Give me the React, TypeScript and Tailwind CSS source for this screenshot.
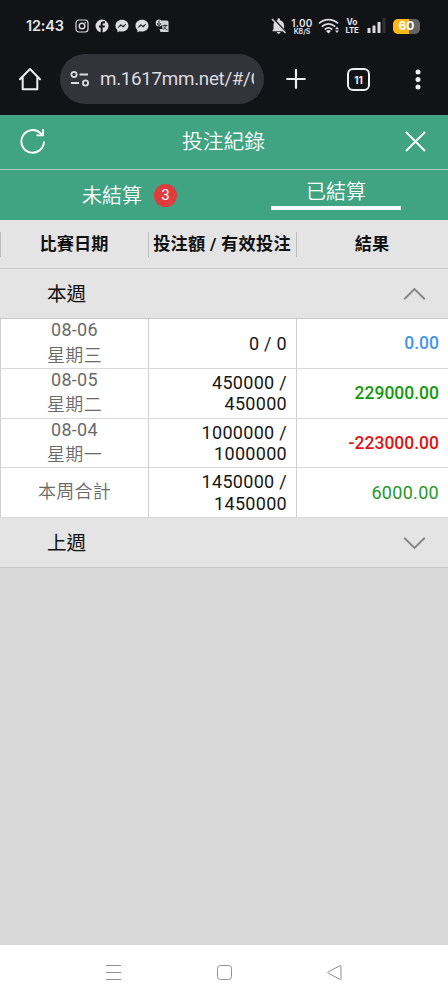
import React from "react";

const latin = "font-['Roboto','Noto_Sans_CJK_TC',sans-serif]";

type Row = {
  day?: string;
  label: string;
  amount: string[];
  result: string;
  tone: string;
};

const rows: Row[] = [
  { day: "08-06", label: "星期三", amount: ["0 / 0"], result: "0.00", tone: "text-[#4596ec] font-medium text-[17.5px]" },
  { day: "08-05", label: "星期二", amount: ["450000 /", "450000"], result: "229000.00", tone: "text-[#149a10] font-medium text-[17.5px]" },
  { day: "08-04", label: "星期一", amount: ["1000000 /", "1000000"], result: "-223000.00", tone: "text-[#e01414] font-medium text-[17.5px]" },
  { label: "本周合計", amount: ["1450000 /", "1450000"], result: "6000.00", tone: "text-[#24982a] text-[18px] tracking-[0.3px]" },
];

function Instagram() {
  return (
    <svg width="14" height="14" viewBox="0 0 14 14" fill="none" stroke="#dcdce0">
      <rect x="1" y="1" width="12" height="12" rx="3" strokeWidth="1.2" />
      <circle cx="7" cy="7" r="2.8" strokeWidth="1.4" />
      <circle cx="10.3" cy="3.7" r="0.8" fill="#dcdce0" stroke="none" />
    </svg>
  );
}

function Facebook() {
  return (
    <svg width="14" height="14" viewBox="0 0 14 14">
      <circle cx="7" cy="7" r="6.5" fill="#dcdce0" />
      <path d="M7.6 14V8.4h2l.4-1.9H7.6V5.4c0-.8.4-1.2 1.2-1.2H10V2.5C7.1 1.9 5.7 3.1 5.7 5.2v1.3H4v1.9h1.7V14z" fill="#121317" />
    </svg>
  );
}

function Messenger() {
  return (
    <svg width="14" height="14" viewBox="0 0 14 14">
      <path d="M7 .8C3.3.8.5 3.3.5 6.7c0 1.8.7 3.2 1.9 4.2v2.3l2.2-1c.7.2 1.5.3 2.4.3 3.7 0 6.500-2.500 6.500-5.800S10.700.8 7 .8z" fill="#dcdce0" />
      <path d="M3 8.600 5.600 5.400l2.300 1.700L11 5 8.400 8.200 6.100 6.600z" fill="#121317" stroke="#121317" strokeWidth=".5" />
    </svg>
  );
}

function Translate() {
  return (
    <svg width="15" height="14" viewBox="0 0 15 14">
      <path d="M6.500 1.500H12A1.500 1.500 0 0 1 13.500 3v10H5.500l-1-3h3z" fill="#d2d3d6" />
      <ellipse cx="4" cy="4" rx="3.300" ry="3.600" fill="#d2d3d6" />
      <path d="M4 1.500v3.800M2.300 4.200c0 2.700 3.400 2.700 3.400 0M4 6.200v1.500" fill="none" stroke="#121317" strokeWidth=".9" />
      <path d="M7.500 6.500h5M10 5.500v1M8 10.300c1.600-.7 2.600-2 3-3.800M8.800 7.500c.6 1.600 1.700 2.700 3.700 3.400" fill="none" stroke="#121317" strokeWidth=".8" />
    </svg>
  );
}

function StatusBar() {
  return (
    <div className="flex h-[52px] items-center pl-[26px] text-[#e4e4e8]">
      <span className="w-[49px] whitespace-nowrap font-['Inter',sans-serif] text-[14.5px] font-semibold leading-none tracking-[-0.2px]">12:43</span>
      <div className="flex items-center gap-[6px]">
        <Instagram />
        <Facebook />
        <Messenger />
        <Messenger />
        <Translate />
      </div>
      <svg className="ml-[100px] shrink-0" width="18" height="16" viewBox="0 0 18 16">
        <path d="M3.500 11.500V7A5.200 5.200 0 0 1 7.500 2.200V1.500a1.300 1.300 0 0 1 2.600 0v.7A5.200 5.200 0 0 1 14 7v4l1.500 1.500v.8h-13v-.8zM7 14h3.600a1.800 1.800 0 0 1-3.600 0z" fill="#dcdce0" />
        <path d="m3.200.8 13 14" stroke="#121317" strokeWidth="2" />
        <path d="m2 1 13.500 14" stroke="#dcdce0" strokeWidth="1.400" />
      </svg>
      <div className="ml-[2px] flex w-[24px] shrink-0 flex-col items-center font-['Inter',sans-serif] font-semibold">
        <span className="text-[10px] leading-[10px] tracking-[0.3px]">1.00</span>
        <span className="text-[7px] leading-[7px]">KB/S</span>
      </div>
      <svg className="ml-[4px] shrink-0" width="23" height="16" viewBox="0 0 23 16" fill="none" stroke="#dcdce0" strokeWidth="1.700">
        <path d="M1 5.500C6.500.2 14.500.2 20 5.500M3.800 8.700c4-3.700 9.400-3.700 13.400 0M6.700 11.500c2.300-2 5.300-2 7.600 0" />
        <path d="M8 13c1.500-1.400 3.500-1.400 5 0l-2.500 2.600z" fill="#dcdce0" stroke="none" />
        <path d="M17 11.200 19 8.800l2 2.400zM17 12.600h4l-2 2.400z" fill="#dcdce0" stroke="none" />
      </svg>
      <div className="ml-[3px] flex w-[16px] shrink-0 flex-col items-center font-['Inter',sans-serif] font-bold">
        <span className="text-[8.5px] leading-[8px]">Vo</span>
        <span className="text-[8px] leading-[8px] tracking-[-0.3px]">LTE</span>
      </div>
      <svg className="ml-[7px] shrink-0" width="19" height="16" viewBox="0 0 19 16" fill="#dcdce0">
        <rect x="0.500" y="10" width="3" height="5" rx=".5" />
        <rect x="5.500" y="7.500" width="3" height="7.500" rx=".5" />
        <rect x="10.500" y="4" width="3" height="11" rx=".5" />
        <rect x="15.500" y="0" width="3" height="15" rx=".5" fill="#303136" />
      </svg>
      <div className="ml-[7px] flex h-[15px] w-[27px] shrink-0 items-center justify-center rounded-[5px] bg-linear-to-r from-[#fbb81b] from-60% to-[#636366] to-60% font-['Inter',sans-serif] text-[12px] font-bold leading-none text-white">60</div>
    </div>
  );
}

function BrowserBar() {
  return (
    <div className="flex h-[62px] items-start pl-[18px]">
      <svg className="mt-[15px] shrink-0" width="24" height="24" viewBox="0 0 24 24" fill="none" stroke="#eeeef0" strokeWidth="2" strokeLinejoin="round" strokeLinecap="round">
        <path d="M4.700 11v11.200h14.600V11M2 12.300 12 2l10 10.300" />
      </svg>
      <div className="ml-[18px] mt-[2px] flex h-[50px] w-[204px] shrink-0 items-center overflow-hidden rounded-full bg-[#333439] px-[10px]">
        <svg className="shrink-0" width="20" height="18" viewBox="0 0 20 18" fill="none" stroke="#dcdce0" strokeWidth="1.800">
          <circle cx="4" cy="4.500" r="2.600" />
          <path d="M9.500 4.500h8.500M1 13h8" />
          <circle cx="15.500" cy="13" r="2.600" />
        </svg>
        <span className="ml-[10px] w-[154px] overflow-hidden whitespace-nowrap font-['Roboto',sans-serif] text-[18.8px] leading-[26px] tracking-[-0.3px] text-[#dcdce0]">m.1617mm.net/#/C</span>
      </div>
      <svg className="ml-[22px] mt-[17px] shrink-0" width="20" height="20" viewBox="0 0 20 20" stroke="#eeeef0" strokeWidth="2.200" strokeLinecap="round">
        <path d="M10 1.200v17.600M1.200 10h17.600" />
      </svg>
      <div className="ml-[41px] mt-[16px] flex h-[23px] w-[23px] shrink-0 items-center justify-center rounded-[6px] border-2 border-[#eeeef0] font-['Inter',sans-serif] text-[10px] font-bold leading-none text-[#eeeef0]">11</div>
      <svg className="ml-[44px] mt-[17px] shrink-0" width="8" height="21" viewBox="0 0 8 21" fill="#eeeef0">
        <circle cx="4" cy="3" r="2.500" />
        <circle cx="4" cy="10.500" r="2.500" />
        <circle cx="4" cy="18" r="2.500" />
      </svg>
    </div>
  );
}

function WeekBar({ label, open }: { label: string; open?: boolean }) {
  return (
    <div className="flex h-[50px] items-center justify-between border-b border-[#c8c8c8] bg-[#e4e4e4] pl-[47px] pr-[22px]">
      <span className="pt-[2px] text-[19.6px] leading-none text-[#111]">{label}</span>
      <svg width="23" height="14" viewBox="0 0 23 14" fill="none" stroke="#858585" strokeWidth="1.900">
        <path d={open ? "M1.200 12.200 11.500 2l10.300 10.200" : "M1.200 1.800 11.500 12 21.800 1.800"} />
      </svg>
    </div>
  );
}

export default function App() {
  return (
    <div className={`flex h-[1000px] w-[448px] flex-col overflow-hidden bg-[#d8d8d8] ${latin}`}>
      <div className="h-[115px] shrink-0 bg-[#121317]">
        <StatusBar />
        <BrowserBar />
      </div>

      <header className="flex h-[55px] shrink-0 items-center justify-between border-b border-[#a9cfc1] bg-[#40a381] pl-[20px] pr-[22px] text-white">
        <svg className="-mt-[2px]" width="26" height="26" viewBox="0 0 26 26" fill="none" stroke="white" strokeWidth="1.900">
          <path d="M24 13.500A11.300 11.300 0 1 1 20.500 5.200L22.500 7" />
          <path d="M23 1v6.400h-6.500" />
        </svg>
        <h1 className="mr-[4px] text-[20.8px] font-[350] leading-none">投注紀錄</h1>
        <svg className="-mt-px" width="21" height="21" viewBox="0 0 21 21" stroke="white" strokeWidth="1.900">
          <path d="m1 1 19 19M20 1 1 20" />
        </svg>
      </header>

      <nav className="flex h-[50px] shrink-0 bg-[#40a381] text-[20px] font-[350] leading-none text-white">
        <div className="flex w-[224px] items-center pl-[82px]">
          <span className="pt-px">未結算</span>
          <span className="ml-[12px] flex h-[23px] w-[23px] items-center justify-center rounded-full bg-[#df3d3d] text-[15px] font-normal">3</span>
        </div>
        <div className="flex w-[224px] flex-col items-center">
          <div className="flex h-[40px] w-[130px] items-center justify-center border-b-4 border-white pt-[7px]">已結算</div>
        </div>
      </nav>

      <div className="grid h-[49px] shrink-0 grid-cols-[148px_148px_152px] items-center border-b border-[#cacaca] bg-[#e4e4e4] text-[17.2px] font-bold leading-[25px] text-[#111]">
        <div className="border-l border-[#bdbdbd] pr-px text-center">比賽日期</div>
        <div className="whitespace-nowrap border-l border-[#bdbdbd] pr-px text-center tracking-[0.25px]">投注額 / 有效投注</div>
        <div className="border-l border-[#bdbdbd] pr-px text-center">結果</div>
      </div>

      <WeekBar label="本週" open />

      <div className="grid h-[199px] shrink-0 grid-rows-4 bg-white">
        {rows.map((row) => (
          <div key={row.label} className="grid grid-cols-[148px_148px_152px] border-b border-[#d8d8d8]">
            <div className="flex flex-col items-center justify-center border-l border-[#d0d0d0] text-[18px] leading-[24.5px] tracking-[0.3px] text-[#6a6a6a]">
              {row.day && <span className="-mt-px mb-px">{row.day}</span>}
              <span className="font-[350]">{row.label}</span>
            </div>
            <div className="flex flex-col items-end justify-center border-l border-[#d0d0d0] pr-[9px] text-[18px] leading-[21.5px] tracking-[0.3px] text-[#161616]">
              {row.amount.map((line) => (
                <span key={line}>{line}</span>
              ))}
            </div>
            <div className={`flex items-center justify-end border-l border-[#d0d0d0] pr-[9px] ${row.tone}`}>{row.result}</div>
          </div>
        ))}
      </div>

      <WeekBar label="上週" />

      <main className="flex-1" />

      <footer className="flex h-[55px] shrink-0 items-center justify-between bg-white px-[105px]">
        <svg width="17" height="17" viewBox="0 0 17 17" stroke="#909090" strokeWidth="1">
          <path d="M1 1.500h15M1 8.500h15M1 15.500h15" />
        </svg>
        <svg width="17" height="17" viewBox="0 0 17 17" fill="none" stroke="#909090" strokeWidth="1">
          <rect x="1.500" y="1.500" width="14" height="14" rx="3" />
        </svg>
        <svg width="17" height="17" viewBox="0 0 17 17" fill="none" stroke="#909090" strokeWidth="1" strokeLinejoin="round">
          <path d="M14 1.700 2.300 7.800q-1 .7 0 1.400L14 15.300q1 .5 1-.6V2.300q0-1-1-.6z" />
        </svg>
      </footer>
    </div>
  );
}
